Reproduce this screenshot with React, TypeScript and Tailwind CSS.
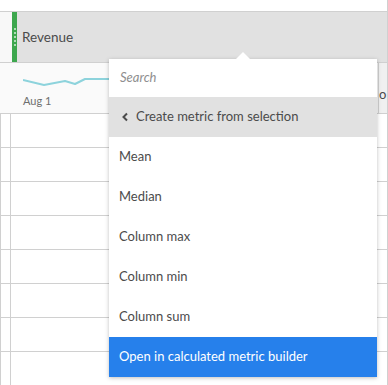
import React from "react";

const items = ["Mean", "Median", "Column max", "Column min", "Column sum"];

const Sparkline = () => (
  <svg width="90" height="20" viewBox="0 0 90 20" className="block">
    <polyline
      points="0,10 21,15 42,11 52,14 62,9 90,9"
      fill="none"
      stroke="#8dd3dc"
      strokeWidth="2"
      strokeLinejoin="round"
    />
  </svg>
);

const App = () => {
  return (
    <div
      className="relative w-[388px] h-[385px] overflow-hidden bg-white text-[#4b4b4b]"
      style={{ fontFamily: "Lato, 'Open Sans', sans-serif" }}
    >
      <div className="h-[12px] border-b border-[#d0d0d0] border-r" />
      <div className="flex h-[51px] border-b border-[#d0d0d0] border-r">
        <div className="w-[12px] bg-[#f8f8f8]" />
        <div className="w-[5px] bg-[#3da74e] flex flex-col items-center justify-center gap-[2px]">
          {[0, 1, 2, 3, 4].map((i) => (
            <span key={i} className="w-[2px] h-[2px] rounded-full bg-white/80" />
          ))}
        </div>
        <div className="flex-1 bg-[#e1e1e1] flex items-center pl-[5px] text-[13.5px]">
          Revenue
        </div>
      </div>
      <div className="flex h-[51px] border-b border-[#d0d0d0] border-r bg-[#fafafa]">
        <div className="flex-1 pl-[23px] pt-[7px]">
          <Sparkline />
          <div className="text-[11px] mt-[3px] text-[#6e6e6e]">Aug 1</div>
        </div>
        <div className="w-[9px] border-l border-[#d0d0d0] bg-[#f0f0f0] flex items-end pb-[9px] text-[13px] overflow-hidden">
          o
        </div>
      </div>
      {[0, 1, 2, 3, 4, 5, 6, 7].map((i) => (
        <div key={i} className="flex h-[34px] border-b border-l border-r border-[#d0d0d0]">
          <div className="w-[10px] border-r border-[#d0d0d0]" />
          <div className="flex-1" />
        </div>
      ))}

      <div className="absolute left-[109px] top-[59px] w-[268px] bg-white shadow-[0_1px_4px_rgba(0,0,0,0.25)] text-[13px]">
        <div className="absolute -top-[7px] left-[127px] w-0 h-0 border-l-[7px] border-r-[7px] border-b-[7px] border-l-transparent border-r-transparent border-b-white" />
        <div className="h-[38px] flex items-center pl-[11px] italic text-[#8e8e8e]">
          Search
        </div>
        <div className="h-[40px] bg-[#e1e1e1] flex items-center pl-[12px] gap-[7px]">
          <svg width="8" height="10" viewBox="0 0 8 10">
            <polyline points="6,1.5 2.5,5 6,8.5" fill="none" stroke="#4b4b4b" strokeWidth="2" />
          </svg>
          Create metric from selection
        </div>
        {items.map((t) => (
          <div key={t} className="h-[40px] flex items-center pl-[10px]">
            {t}
          </div>
        ))}
        <div className="h-[40px] bg-[#2680eb] text-white flex items-center pl-[10px]">
          Open in calculated metric builder
        </div>
      </div>
    </div>
  );
};

export default App;
